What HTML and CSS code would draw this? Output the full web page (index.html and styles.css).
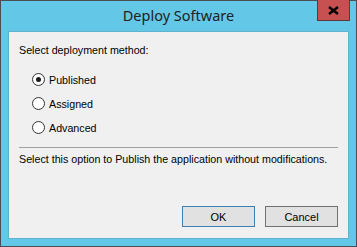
FILE: index.html
```html
<!DOCTYPE html>
<html lang="en">

<head>
    <meta charset="UTF-8">
    <title>Deploy Software</title>
    <link rel="stylesheet" href="styles.css">
</head>

<body>
    <div class="window">
        <div class="titlebar">
            <span class="title">Deploy Software</span>
            <div class="close-btn">
                <svg width="11" height="9" viewBox="0 0 11 9">
                    <path d="M1 1 L10 8 M10 1 L1 8" stroke="#000" stroke-width="2.4" />
                </svg>
            </div>
        </div>

        <div class="client">
            <p class="label">Select deployment method:</p>

            <div class="options">
                <label class="option"><span class="radio checked"></span>Published</label>
                <label class="option"><span class="radio"></span>Assigned</label>
                <label class="option"><span class="radio"></span>Advanced</label>
            </div>

            <hr class="separator">

            <p class="hint">Select this option to Publish the application without modifications.</p>

            <div class="buttons">
                <button class="btn default">OK</button>
                <button class="btn">Cancel</button>
            </div>
        </div>
    </div>
</body>

</html>
```

FILE: styles.css
```css
* {
    margin: 0;
    padding: 0;
    box-sizing: border-box;
}

body,
html {
    width: 357px;
    height: 247px;
    overflow: hidden;
    background: #63c7e8;
}

.window {
    width: 357px;
    height: 247px;
    border: 1px solid #4a4f53;
    background: #63c7e8;
    display: flex;
    flex-direction: column;
}

.titlebar {
    position: relative;
    height: 30px;
    display: flex;
    align-items: center;
    justify-content: center;
}

.title {
    font-family: "Noto Sans", sans-serif;
    font-size: 14.5px;
    color: #222;
    padding-bottom: 3px;
}

.close-btn {
    position: absolute;
    top: -1px;
    right: 6px;
    width: 33px;
    height: 21px;
    background: #c75050;
    border: 1px solid #5c3a3a;
    border-top: none;
    display: flex;
    align-items: center;
    justify-content: center;
}

.client {
    flex: 1;
    margin: 0 7px 7px 7px;
    background: #f0f0f0;
    border: 1px solid #5fb3cf;
    padding: 12px 10px 0 10px;
    font-family: "Liberation Sans", Arial, sans-serif;
    font-size: 10.7px;
    color: #000;
    display: flex;
    flex-direction: column;
}

.label {
    line-height: 13px;
}

.options {
    display: flex;
    flex-direction: column;
    gap: 11px;
    margin-top: 16px;
    padding-left: 13px;
}

.option {
    display: flex;
    align-items: center;
    gap: 4px;
    height: 13px;
}

.radio {
    width: 13px;
    height: 13px;
    border: 1px solid #333;
    border-radius: 50%;
    background: #fff;
    display: flex;
    align-items: center;
    justify-content: center;
}

.radio.checked::after {
    content: "";
    width: 5px;
    height: 5px;
    border-radius: 50%;
    background: #1a1a1a;
}

.separator {
    border: none;
    border-top: 1px solid #a0a0a0;
    margin-top: 13px;
}

.hint {
    margin-top: 5px;
    line-height: 13px;
}

.buttons {
    display: flex;
    justify-content: flex-end;
    gap: 10px;
    margin-top: 40px;
}

.btn {
    width: 73px;
    height: 21px;
    background: #e1e1e1;
    border: 1px solid #707070;
    font-family: "Liberation Sans", Arial, sans-serif;
    font-size: 11px;
    color: #000;
}

.btn.default {
    border-color: #3c7fb1;
}
```
